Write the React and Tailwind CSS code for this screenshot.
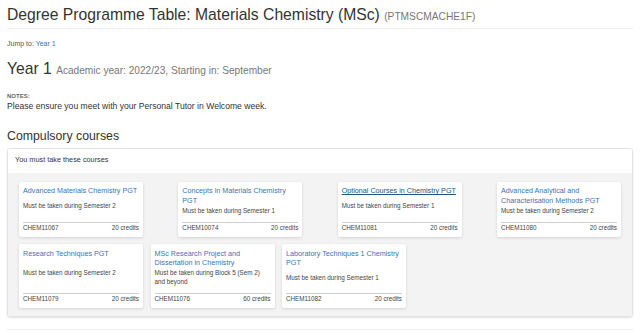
import React from "react";

const row1 = [
  { title: "Advanced Materials Chemistry PGT", desc: "Must be taken during Semester 2", code: "CHEM11067", credits: "20 credits" },
  { title: "Concepts in Materials Chemistry PGT", desc: "Must be taken during Semester 1", code: "CHEM10074", credits: "20 credits" },
  { title: "Optional Courses in Chemistry PGT", desc: "Must be taken during Semester 1", code: "CHEM11081", credits: "20 credits", hover: true },
  { title: "Advanced Analytical and Characterisation Methods PGT", desc: "Must be taken during Semester 2", code: "CHEM11080", credits: "20 credits" },
];

const row2 = [
  { title: "Research Techniques PGT", desc: "Must be taken during Semester 2", code: "CHEM11079", credits: "20 credits" },
  { title: "MSc Research Project and Dissertation in Chemistry", desc: "Must be taken during Block 5 (Sem 2) and beyond", code: "CHEM11076", credits: "60 credits" },
  { title: "Laboratory Techniques 1 Chemistry PGT", desc: "Must be taken during Semester 1", code: "CHEM11082", credits: "20 credits" },
];

function Card({ c, tall }) {
  return (
    <div className="w-[124px] bg-white rounded-[2px] shadow-[0_1px_3px_rgba(0,0,0,0.14)] px-[4px] pt-[4.5px] pb-[4.7px] flex flex-col">
      <div
        className={
          "text-[7.2px] leading-[9.7px] min-h-[14.7px] " +
          (c.hover ? "text-[#23527c] underline" : "text-[#3a73b8]")
        }
      >
        {c.title}
      </div>
      <div
        className={
          (tall ? "h-[18px] " : "h-[10px] ") +
          "mb-[7px] flex items-center text-[6.3px] leading-[9px] text-[#444]"
        }
      >
        <div>{c.desc}</div>
      </div>
      <div className="mt-auto border-t border-[#d0d0d0] flex justify-between text-[6.3px] leading-[9px] text-[#444]">
        <span>{c.code}</span>
        <span>{c.credits}</span>
      </div>
    </div>
  );
}

export default function App() {
  return (
    <div className="w-[640px] h-[333px] overflow-hidden bg-white px-[7px] text-[#333] font-['Liberation_Sans',Arial,sans-serif]">
      <div className="pt-[5px] pb-[3px] border-b border-[#eee]">
        <h1 className="text-[15.7px] leading-[20px] font-normal">
          Degree Programme Table: Materials Chemistry (MSc){" "}
          <span className="text-[10.2px] leading-none text-[#777]">(PTMSCMACHE1F)</span>
        </h1>
      </div>
      <div className="mt-[10px] text-[7px] leading-[10px] text-[#555]">
        Jump to: <span className="text-[#3a73b8]">Year 1</span>
      </div>
      <h2 className="mt-[10px] text-[15.7px] leading-[20px] font-normal">
        Year 1{" "}
        <span className="text-[10.15px] leading-none text-[#777]">Academic year: 2022/23, Starting in: September</span>
      </h2>
      <div className="mt-[13px] text-[6px] leading-[8px] font-bold text-[#666]">NOTES:</div>
      <div className="mt-[0.5px] text-[8.6px] leading-[11px] text-[#333]">
        Please ensure you meet with your Personal Tutor in Welcome week.
      </div>
      <h3 className="mt-[16px] text-[12.3px] leading-[16px] font-normal">Compulsory courses</h3>
      <div className="mt-[4px] border border-[#e2e2e2] rounded-[3px] overflow-hidden shadow-[0_1px_2px_rgba(0,0,0,0.12)]">
        <div className="h-[24px] bg-white flex items-center px-[7px] text-[7.3px] text-[#333]">
          You must take these courses
        </div>
        <div className="bg-[#f3f3f3] pt-[9px] pb-[8px] px-[11px]">
          <div className="flex justify-between">
            {row1.map((c) => (
              <Card key={c.code} c={c} />
            ))}
          </div>
          <div className="mt-[7px] flex gap-[7.5px]">
            {row2.map((c) => (
              <Card key={c.code} c={c} tall />
            ))}
          </div>
        </div>
      </div>
      <div className="mt-[12px] border-t border-[#eee]" />
    </div>
  );
}
